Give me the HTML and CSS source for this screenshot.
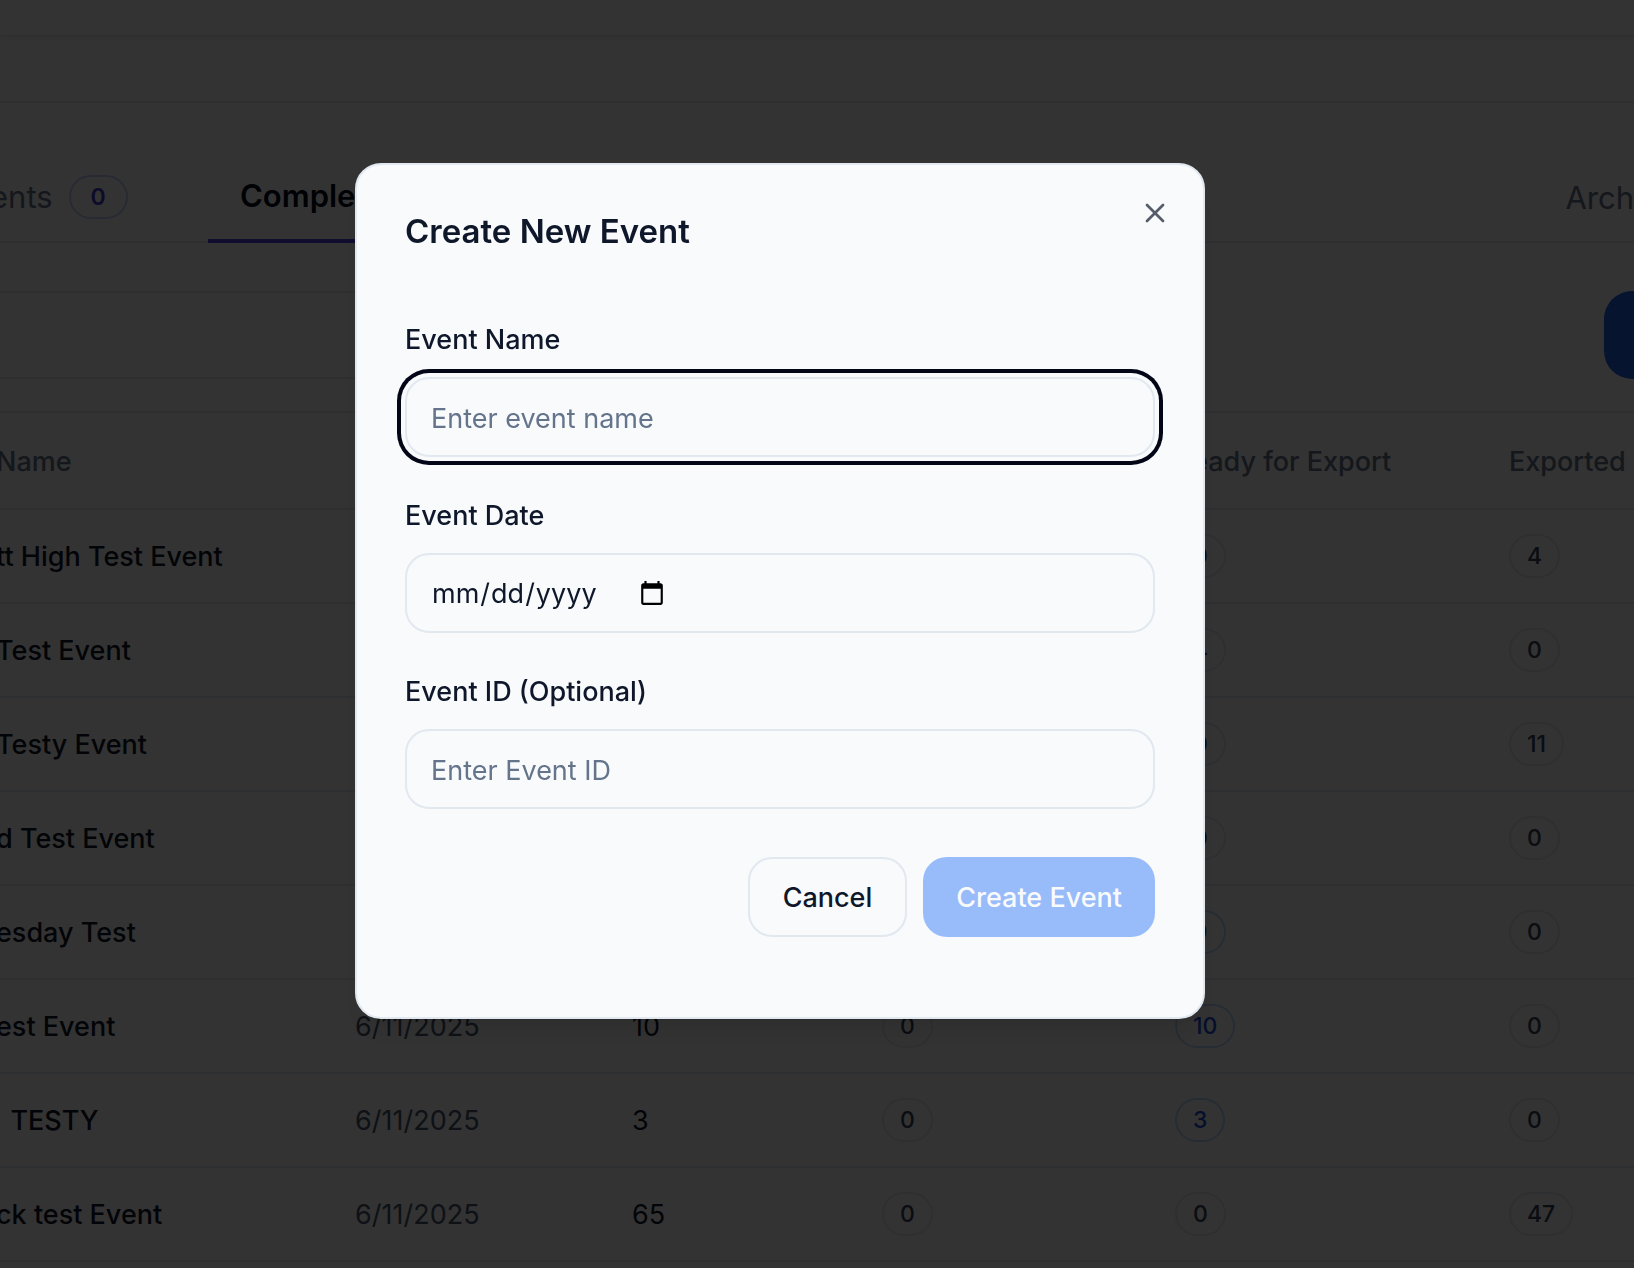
FILE: index.html
```html
<!DOCTYPE html>
<html lang="en">
<head>
<meta charset="utf-8">
<title>Events</title>
<link rel="stylesheet" href="styles.css">
</head>
<body>
<div class="page">
  <div class="topbar"></div>
  <div class="subbar"></div>
  <nav class="tabs">
    <a class="tab tab-first" href="#">ents <span class="badge badge-indigo">0</span></a>
    <a class="tab tab-active" href="#">Completed</a>
    <a class="tab tab-last" href="#">Arch</a>
  </nav>
  <div class="toolbar">
    <input class="search" type="search" aria-label="Search events">
    <button class="new-event" type="button" aria-label="New event"></button>
  </div>
  <table class="events">
    <colgroup>
      <col class="col-name"><col class="col-date"><col class="col-total"><col class="col-pending"><col class="col-ready"><col>
    </colgroup>
    <thead>
      <tr><th class="name">Name</th><th></th><th></th><th></th><th>Ready for Export</th><th>Exported</th></tr>
    </thead>
    <tbody>
      <tr><td class="name">tt High Test Event</td><td></td><td></td><td></td><td><span class="badge">0</span></td><td><span class="badge">4</span></td></tr>
      <tr><td class="name">Test Event</td><td></td><td></td><td></td><td><span class="badge">4</span></td><td><span class="badge">0</span></td></tr>
      <tr><td class="name">Testy Event</td><td></td><td></td><td></td><td><span class="badge">0</span></td><td><span class="badge">11</span></td></tr>
      <tr><td class="name">d Test Event</td><td></td><td></td><td></td><td><span class="badge">0</span></td><td><span class="badge">0</span></td></tr>
      <tr><td class="name">esday Test</td><td></td><td></td><td></td><td><span class="badge badge-blue">9</span></td><td><span class="badge">0</span></td></tr>
      <tr><td class="name">est Event</td><td class="date">6/11/2025</td><td class="total">10</td><td><span class="badge">0</span></td><td><span class="badge badge-blue">10</span></td><td><span class="badge">0</span></td></tr>
      <tr><td class="name">&nbsp; TESTY</td><td class="date">6/11/2025</td><td class="total">3</td><td><span class="badge">0</span></td><td><span class="badge badge-blue">3</span></td><td><span class="badge">0</span></td></tr>
      <tr><td class="name">ck test Event</td><td class="date">6/11/2025</td><td class="total">65</td><td><span class="badge">0</span></td><td><span class="badge">0</span></td><td><span class="badge">47</span></td></tr>
    </tbody>
  </table>
</div>

<div class="overlay">
  <section class="modal" role="dialog" aria-modal="true" aria-labelledby="modal-title">
    <button class="close" type="button" aria-label="Close">
      <svg width="32" height="32" viewBox="0 0 24 24" fill="none" stroke="currentColor" stroke-width="2" stroke-linecap="round" stroke-linejoin="round"><path d="M18 6 6 18"/><path d="m6 6 12 12"/></svg>
    </button>
    <h2 class="modal-title" id="modal-title">Create New Event</h2>
    <form class="form">
      <div class="field">
        <label for="event-name">Event Name</label>
        <input class="input input-focused" id="event-name" type="text" placeholder="Enter event name">
      </div>
      <div class="field">
        <label for="event-date">Event Date</label>
        <input class="input" id="event-date" type="date">
      </div>
      <div class="field">
        <label for="event-id">Event ID (Optional)</label>
        <input class="input" id="event-id" type="text" placeholder="Enter Event ID">
      </div>
      <div class="actions">
        <button class="btn btn-outline" type="button">Cancel</button>
        <button class="btn btn-primary" type="submit" disabled>Create Event</button>
      </div>
    </form>
  </section>
</div>
</body>
</html>
```
FILE: styles.css
```css
* { box-sizing: border-box; }

body {
  margin: 0;
  background: #fff;
  color: #0f172a;
  font-family: Inter, "Liberation Sans", sans-serif;
  font-size: 27px;
  line-height: 40px;
}

input, button { font: inherit; color: inherit; }

.page {
  height: 100vh;
  overflow: hidden;
}

.topbar {
  height: 37px;
  border-bottom: 2px solid #e2e8f0;
  box-shadow: 0 2px 4px rgba(0, 0, 0, 0.05);
}

.subbar {
  height: 66px;
  border-bottom: 2px solid #e2e8f0;
}

.tabs {
  display: flex;
  height: 140px;
  padding-top: 48px;
  border-bottom: 2px solid #e2e8f0;
  font-size: 31px;
}

.tab {
  display: flex;
  align-items: center;
  height: 92px;
  color: #64748b;
  text-decoration: none;
}

.tab-first {
  width: 218px;
  margin-left: -10px;
  gap: 16px;
}

.tab-active {
  padding: 2px 32px 0;
  border-bottom: 4px solid #4f46e5;
  color: #020617;
  font-weight: 600;
}

.tab-last {
  margin-left: auto;
  padding-top: 2px;
}

.badge {
  display: inline-block;
  height: 44px;
  padding: 0 16px;
  border: 2px solid #e2e8f0;
  border-radius: 22px;
  color: #334155;
  font-size: 23px;
  font-weight: 500;
  line-height: 40px;
  vertical-align: middle;
}

.badge-indigo {
  padding: 0 20px;
  border-color: #c7d2fe;
  color: #4338ca;
  font-weight: 600;
}

.badge-blue {
  border-color: #bfdbfe;
  color: #1d4ed8;
}

.toolbar {
  display: flex;
  justify-content: space-between;
  padding: 48px 0 32px;
}

.search {
  width: 600px;
  height: 88px;
  border: 2px solid #e2e8f0;
  border-left: 0;
  border-radius: 0 28px 28px 0;
  background: #fff;
}

.new-event {
  width: 30px;
  height: 88px;
  border: 0;
  border-radius: 28px 0 0 28px;
  background: #2563eb;
}

.events {
  width: 100%;
  table-layout: fixed;
  border-collapse: separate;
  border-spacing: 0;
  border-top: 2px solid #e2e8f0;
}

.col-name { width: 355px; }
.col-date { width: 277px; }
.col-total { width: 250px; }
.col-pending { width: 293px; }
.col-ready { width: 334px; }

.events th,
.events td {
  height: 94px;
  padding: 0;
  border-bottom: 2px solid #e2e8f0;
  text-align: left;
  white-space: nowrap;
}

.events th {
  height: 97px;
  padding-top: 2px;
  color: #64748b;
  font-weight: 500;
}

.events .name,
.events .date,
.events .total { padding-top: 2px; }

.events .name {
  font-weight: 500;
  text-indent: -4px;
}

.events .date { color: #475569; }

.overlay {
  position: fixed;
  inset: 0;
  display: grid;
  place-items: center;
  padding: 0 74px 86px 0;
  background: rgba(0, 0, 0, 0.8);
}

.modal {
  position: relative;
  width: 100%;
  max-width: 850px;
  padding: 48px 48px 80px;
  border: 2px solid #e2e8f0;
  border-radius: 26px;
  background: #f8fafc;
  box-shadow: 0 20px 30px -6px rgba(0, 0, 0, 0.1), 0 8px 12px -8px rgba(0, 0, 0, 0.1);
}

.close {
  position: absolute;
  top: 32px;
  right: 32px;
  width: 32px;
  height: 32px;
  padding: 0;
  border: 0;
  background: none;
  color: #565c69;
}

.close svg { display: block; }

.modal-title {
  margin: 0 0 76px;
  font-size: 33px;
  font-weight: 600;
  line-height: 36px;
}

.form {
  display: flex;
  flex-direction: column;
  gap: 44px;
}

.field {
  display: flex;
  flex-direction: column;
  gap: 22px;
}

.field label {
  font-weight: 500;
  line-height: 30px;
}

.input {
  display: flex;
  align-items: center;
  width: 100%;
  height: 80px;
  padding: 2px 24px 0;
  border: 2px solid #e2e8f0;
  border-radius: 24px;
  outline: 0;
  background: #f8fafc;
}

.input::placeholder {
  color: #64748b;
  opacity: 1;
}

.input::-webkit-calendar-picker-indicator {
  width: 28px;
  height: 28px;
  margin-left: 4px;
  padding: 0;
}

.input-focused { box-shadow: 0 0 0 4px #f8fafc, 0 0 0 8px #020617; }

.actions {
  display: flex;
  justify-content: flex-end;
  gap: 16px;
  padding-top: 4px;
}

.btn {
  height: 80px;
  padding: 2px 33px 0;
  border: 0;
  border-radius: 24px;
  font-weight: 500;
}

.btn-outline {
  border: 2px solid #e2e8f0;
  background: #f8fafc;
}

.btn-primary {
  background: #98bbfa;
  color: #f8fafc;
}
```
